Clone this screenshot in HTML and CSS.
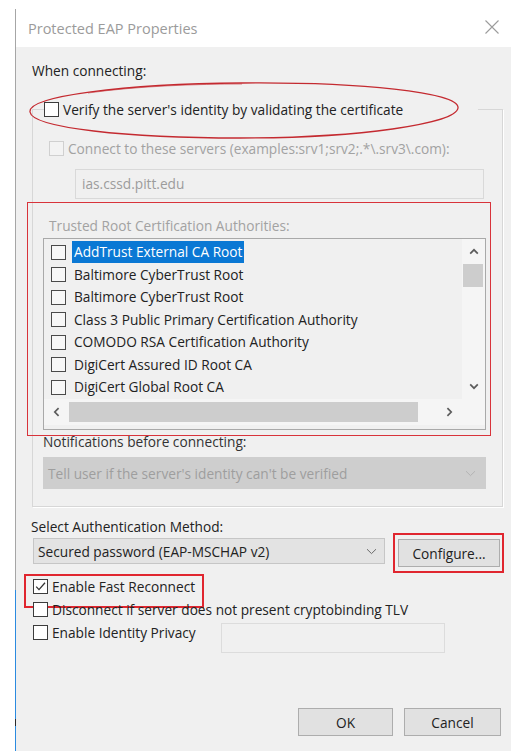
FILE: index.html
```html
<!DOCTYPE html>
<html lang="en">
<head>
<meta charset="utf-8">
<title>Protected EAP Properties</title>
<link rel="stylesheet" href="styles.css">
</head>
<body>
<div class="window">
  <header class="titlebar">
    <span class="title">Protected EAP Properties</span>
    <svg class="close" width="14" height="14" viewBox="0 0 14 14" aria-label="Close">
      <path d="M0.5 0.5L13.5 13.5M13.5 0.5L0.5 13.5" stroke="#9c9c9c" stroke-width="1.1" fill="none"/>
    </svg>
  </header>

  <main class="content">
    <div class="label when">When connecting:</div>

    <section class="group">
      <div class="group-head row">
        <span class="check"></span>
        <span>Verify the server's identity by validating the certificate</span>
        <svg class="ring" width="440" height="64" viewBox="0 0 440 64">
          <path d="M214 3C330 2 432 12 430 28C428 44 330 58 212 58C100 58 4 48 2 32C0 16 96 4 214 3Z" fill="none" stroke="#c42a30" stroke-width="1.3"/>
          <path d="M60 13C110 6 170 4 214 4" fill="none" stroke="#c42a30" stroke-width="0.8" opacity="0.7"/>
        </svg>
      </div>

      <div class="row connect muted">
        <span class="check off"></span>
        <span>Connect to these servers (examples:srv1;srv2;.*\.srv3\.com):</span>
      </div>

      <div class="field servers">ias.cssd.pitt.edu</div>

      <div class="mark trusted">
        <div class="label muted trusted-label">Trusted Root Certification Authorities:</div>
        <div class="listbox">
          <ul class="items">
            <li><span class="check"></span><span class="name selected">AddTrust External CA Root</span></li>
            <li><span class="check"></span><span class="name">Baltimore CyberTrust Root</span></li>
            <li><span class="check"></span><span class="name">Baltimore CyberTrust Root</span></li>
            <li><span class="check"></span><span class="name">Class 3 Public Primary Certification Authority</span></li>
            <li><span class="check"></span><span class="name">COMODO RSA Certification Authority</span></li>
            <li><span class="check"></span><span class="name">DigiCert Assured ID Root CA</span></li>
            <li><span class="check"></span><span class="name">DigiCert Global Root CA</span></li>
          </ul>
          <div class="vscroll">
            <div class="arrow">
              <svg width="10" height="7" viewBox="0 0 10 7"><path d="M1.2 5.6L5 1.8L8.8 5.6" fill="none" stroke="#5c5c5c" stroke-width="1.7"/></svg>
            </div>
            <div class="thumb"></div>
            <div class="track"></div>
            <div class="arrow">
              <svg width="10" height="7" viewBox="0 0 10 7"><path d="M1.2 1.4L5 5.2L8.8 1.4" fill="none" stroke="#5c5c5c" stroke-width="1.7"/></svg>
            </div>
          </div>
          <div class="hscroll">
            <div class="arrow">
              <svg width="7" height="10" viewBox="0 0 7 10"><path d="M5.6 1.2L1.8 5L5.6 8.8" fill="none" stroke="#5c5c5c" stroke-width="1.7"/></svg>
            </div>
            <div class="thumb"></div>
            <div class="track"></div>
            <div class="arrow">
              <svg width="7" height="10" viewBox="0 0 7 10"><path d="M1.4 1.2L5.2 5L1.4 8.8" fill="none" stroke="#5c5c5c" stroke-width="1.7"/></svg>
            </div>
          </div>
          <div class="corner"></div>
        </div>
      </div>

      <div class="label notify">Notifications before connecting:</div>
      <div class="combo locked">
        <span>Tell user if the server's identity can't be verified</span>
        <svg width="11" height="7" viewBox="0 0 11 7"><path d="M1 1.2L5.5 5.6L10 1.2" fill="none" stroke="#b4b4b4" stroke-width="1"/></svg>
      </div>
    </section>

    <div class="label method">Select Authentication Method:</div>
    <div class="method-row">
      <div class="combo method-combo">
        <span>Secured password (EAP-MSCHAP v2)</span>
        <svg width="11" height="7" viewBox="0 0 11 7"><path d="M1 1.2L5.5 5.6L10 1.2" fill="none" stroke="#6a6a6a" stroke-width="1"/></svg>
      </div>
      <div class="mark configure-mark">
        <button class="btn configure" type="button">Configure...</button>
      </div>
    </div>

    <div class="mark fast">
      <div class="row">
        <span class="check">
          <svg width="13" height="13" viewBox="0 0 13 13"><path d="M2.2 6.6L5 9.6L11 2.8" fill="none" stroke="#333" stroke-width="1.3"/></svg>
        </span>
        <span>Enable Fast Reconnect</span>
      </div>
    </div>

    <div class="row option">
      <span class="check"></span>
      <span>Disconnect if server does not present cryptobinding TLV</span>
    </div>

    <div class="identity">
      <div class="row identity-label">
        <span class="check"></span>
        <span>Enable Identity Privacy</span>
      </div>
      <div class="field identity-field"></div>
    </div>

    <div class="actions">
      <button class="btn ok" type="button">OK</button>
      <button class="btn cancel" type="button">Cancel</button>
    </div>
  </main>
</div>
</body>
</html>
```

FILE: styles.css
```css
* {
  box-sizing: border-box;
}

body {
  margin: 0;
  background: #ffffff;
  font-family: "Open Sans", "Noto Sans", sans-serif;
  font-size: 13.7px;
  color: #222222;
}

/* dialog frame */
.window {
  margin: 9px 0 0 15px;
  height: 742px;
  display: flex;
  flex-direction: column;
  border-left: 1px solid #a6a6a6;
  border-image: linear-gradient(to bottom, #a6a6a6 0 580px, #2b8be0 580px 709px, #2a2a2a 709px 716px, #2b8be0 716px) 1;
}

.titlebar {
  flex: none;
  height: 38px;
  padding: 0 12px;
  display: flex;
  align-items: center;
  justify-content: space-between;
  background: #ffffff;
}

.title {
  font-size: 14.5px;
  color: #9b9b9b;
}

.close {
  margin-top: -2px;
}

.content {
  flex: 1;
  background: #f0f0f0;
  padding: 14px 10px 0 16px;
  display: flex;
  flex-direction: column;
  align-items: flex-start;
}

.label {
  height: 20px;
  line-height: 20px;
  white-space: nowrap;
}

.muted {
  color: #a2a2a2;
}

.row {
  display: flex;
  align-items: center;
  gap: 4px;
  height: 20px;
  white-space: nowrap;
}

/* checkboxes */
.check {
  flex: none;
  width: 15px;
  height: 15px;
  border: 1px solid #3c3c3c;
  background: #ffffff;
  display: flex;
  align-items: center;
  justify-content: center;
}

.check.off {
  border-color: #d0d0d0;
  background: #f3f3f3;
}

/* annotation frames */
.mark {
  border: 2px solid #e0262f;
}

/* certificate group */
.group {
  margin-top: 28px;
  width: 471px;
  border: 1px solid #d7d7d7;
  box-shadow: 1px 1px 0 #ffffff;
  padding-bottom: 17px;
}

.group-head {
  position: relative;
  margin: -11px 0 0 11px;
  width: 434px;
  background: #f0f0f0;
}

.ring {
  position: absolute;
  left: -16px;
  top: -19px;
  pointer-events: none;
}

.connect {
  margin: 19px 0 0 16px;
}

.field {
  border: 1px solid #d9d9d9;
  background: #f0f0f0;
}

.servers {
  margin: 11px 0 0 42px;
  width: 409px;
  height: 30px;
  padding-left: 6px;
  line-height: 28px;
  color: #9c9c9c;
}

.trusted {
  margin: 3px 0 0 -6px;
  width: 464px;
  height: 234px;
  border-width: 1px;
  border-color: #d8333b;
  padding-top: 13px;
}

.trusted-label {
  margin-left: 21px;
}

.listbox {
  margin: 2px 0 0 15px;
  width: 443px;
  height: 192px;
  border: 1px solid #a9a9a9;
  background: #f0f0f0;
  display: grid;
  grid-template-columns: 418px 23px;
  grid-template-rows: 160px 26px 1fr;
}

.items {
  margin: 0;
  padding: 2px 0 0 0;
  list-style: none;
  overflow: hidden;
}

.items li {
  height: 22.5px;
  display: flex;
  align-items: center;
  gap: 6px;
  padding-left: 7px;
  white-space: nowrap;
}

.items .check {
  background: #f7f7f7;
  border-color: #4a4a4a;
}

.name {
  padding: 0 2px;
  height: 22px;
  line-height: 22px;
}

.name.selected {
  background: #0a78d4;
  color: #ffffff;
}

.vscroll {
  grid-column: 2;
  grid-row: 1;
  background: #f5f5f5;
  display: flex;
  flex-direction: column;
}

.vscroll .arrow {
  height: 25px;
  display: flex;
  align-items: center;
  justify-content: center;
}

.vscroll .thumb {
  height: 23px;
  margin: 0 2px 0 1px;
  background: #cdcdcd;
}

.vscroll .track,
.hscroll .track {
  flex: 1;
}

.hscroll {
  grid-column: 1;
  grid-row: 2;
  background: #f5f5f5;
  display: flex;
  align-items: center;
}

.hscroll .arrow {
  width: 25px;
  height: 100%;
  display: flex;
  align-items: center;
  justify-content: center;
}

.hscroll .thumb {
  width: 349px;
  height: 20px;
  background: #cdcdcd;
}

.corner {
  grid-column: 2;
  grid-row: 2;
  background: #f5f5f5;
}

.notify {
  margin: -2px 0 0 10px;
  height: 16px;
  line-height: 16px;
  color: #333333;
}

/* drop-down lists */
.combo {
  display: flex;
  align-items: center;
  justify-content: space-between;
  white-space: nowrap;
}

.locked {
  margin: 7px 0 0 10px;
  width: 443px;
  height: 32px;
  padding: 0 10px 0 5px;
  background: #cecece;
  color: #9e9e9e;
}

.method {
  margin: 10px 0 0 -1px;
}

.method-row {
  display: flex;
  align-items: flex-start;
  margin: -4px 0 0 1px;
}

.method-combo {
  margin-top: 5px;
  width: 352px;
  height: 26px;
  padding: 0 7px 0 4px;
  background: #e3e3e3;
  border: 1px solid #c6c6c6;
}

.configure-mark {
  margin-left: 8px;
  padding: 4px 2px 4px 3px;
}

/* push buttons */
.btn {
  font: inherit;
  color: #222222;
  background: #e1e1e1;
  border: 1px solid #adadad;
  height: 28px;
  padding: 0;
}

.configure {
  width: 102px;
  display: block;
}

.fast {
  margin: 1px 0 -9px -8px;
  width: 180px;
  height: 34px;
  padding-left: 7px;
}

.option {
  margin-left: 1px;
}

.identity {
  display: flex;
  align-items: flex-start;
  margin: 3px 0 0 1px;
}

.identity-label {
  width: 188px;
}

.identity-field {
  margin-top: 1px;
  width: 224px;
  height: 30px;
  border-color: #dcdcdc;
}

.actions {
  align-self: flex-end;
  display: flex;
  gap: 11px;
  margin-top: 55px;
}

.ok {
  width: 95px;
}

.cancel {
  width: 97px;
}
```
